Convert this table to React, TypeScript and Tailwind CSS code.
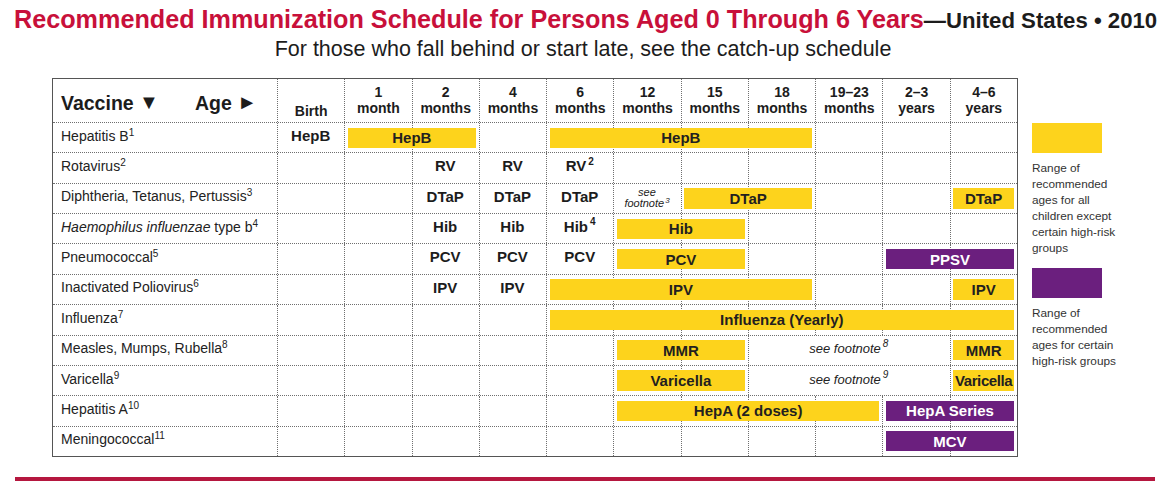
import React from 'react';

const COL_START = [
  'col-start-2',
  'col-start-3',
  'col-start-4',
  'col-start-5',
  'col-start-6',
  'col-start-7',
  'col-start-8',
  'col-start-9',
  'col-start-10',
  'col-start-11',
  'col-start-12',
];
const COL_SPAN = ['', 'col-span-1', 'col-span-2', 'col-span-3', 'col-span-4', 'col-span-5', 'col-span-6', 'col-span-7'];

const ages: Array<[string, string]> = [
  ['', 'Birth'],
  ['1', 'month'],
  ['2', 'months'],
  ['4', 'months'],
  ['6', 'months'],
  ['12', 'months'],
  ['15', 'months'],
  ['18', 'months'],
  ['19–23', 'months'],
  ['2–3', 'years'],
  ['4–6', 'years'],
];

type Item = {
  col: number;
  span?: number;
  kind: 'y' | 'p' | 'txt' | 'note' | 'note2';
  label?: string;
  sup?: string;
  tight?: boolean;
};

type Row = { name: React.ReactNode; items: Item[]; merge?: [number, number] };

const rows: Row[] = [
  {
    name: <>Hepatitis B<sup className="text-[10px]">1</sup></>,
    items: [
      { col: 0, kind: 'txt', label: 'HepB' },
      { col: 1, span: 2, kind: 'y', label: 'HepB' },
      { col: 4, span: 4, kind: 'y', label: 'HepB' },
    ],
  },
  {
    name: <>Rotavirus<sup className="text-[10px]">2</sup></>,
    items: [
      { col: 2, kind: 'txt', label: 'RV' },
      { col: 3, kind: 'txt', label: 'RV' },
      { col: 4, kind: 'txt', label: 'RV', sup: '2' },
    ],
  },
  {
    name: <>Diphtheria, Tetanus, Pertussis<sup className="text-[10px]">3</sup></>,
    items: [
      { col: 2, kind: 'txt', label: 'DTaP' },
      { col: 3, kind: 'txt', label: 'DTaP' },
      { col: 4, kind: 'txt', label: 'DTaP' },
      { col: 5, kind: 'note2', sup: '3' },
      { col: 6, span: 2, kind: 'y', label: 'DTaP' },
      { col: 10, kind: 'y', label: 'DTaP' },
    ],
  },
  {
    name: <><i>Haemophilus influenzae</i> type b<sup className="text-[10px]">4</sup></>,
    items: [
      { col: 2, kind: 'txt', label: 'Hib' },
      { col: 3, kind: 'txt', label: 'Hib' },
      { col: 4, kind: 'txt', label: 'Hib', sup: '4' },
      { col: 5, span: 2, kind: 'y', label: 'Hib' },
    ],
  },
  {
    name: <>Pneumococcal<sup className="text-[10px]">5</sup></>,
    items: [
      { col: 2, kind: 'txt', label: 'PCV' },
      { col: 3, kind: 'txt', label: 'PCV' },
      { col: 4, kind: 'txt', label: 'PCV' },
      { col: 5, span: 2, kind: 'y', label: 'PCV' },
      { col: 9, span: 2, kind: 'p', label: 'PPSV' },
    ],
  },
  {
    name: <>Inactivated Poliovirus<sup className="text-[10px]">6</sup></>,
    items: [
      { col: 2, kind: 'txt', label: 'IPV' },
      { col: 3, kind: 'txt', label: 'IPV' },
      { col: 4, span: 4, kind: 'y', label: 'IPV' },
      { col: 10, kind: 'y', label: 'IPV' },
    ],
  },
  {
    name: <>Influenza<sup className="text-[10px]">7</sup></>,
    items: [{ col: 4, span: 7, kind: 'y', label: 'Influenza (Yearly)' }],
  },
  {
    name: <>Measles, Mumps, Rubella<sup className="text-[10px]">8</sup></>,
    merge: [7, 3],
    items: [
      { col: 5, span: 2, kind: 'y', label: 'MMR' },
      { col: 7, span: 3, kind: 'note', sup: '8' },
      { col: 10, kind: 'y', label: 'MMR' },
    ],
  },
  {
    name: <>Varicella<sup className="text-[10px]">9</sup></>,
    merge: [7, 3],
    items: [
      { col: 5, span: 2, kind: 'y', label: 'Varicella' },
      { col: 7, span: 3, kind: 'note', sup: '9' },
      { col: 10, kind: 'y', label: 'Varicella', tight: true },
    ],
  },
  {
    name: <>Hepatitis A<sup className="text-[10px]">10</sup></>,
    items: [
      { col: 5, span: 4, kind: 'y', label: 'HepA (2 doses)' },
      { col: 9, span: 2, kind: 'p', label: 'HepA Series' },
    ],
  },
  {
    name: <>Meningococcal<sup className="text-[10px]">11</sup></>,
    items: [{ col: 9, span: 2, kind: 'p', label: 'MCV' }],
  },
];

function CellItem({ item }: { item: Item }) {
  const place = `${COL_START[item.col]} ${COL_SPAN[item.span ?? 1]} row-start-1`;

  if (item.kind === 'y' || item.kind === 'p') {
    const color = item.kind === 'y' ? 'bg-[#fdd31c] text-[#231f20]' : 'bg-[#6b1f7e] text-white';
    return (
      <div
        className={`${place} ${color} ${item.tight ? 'tracking-[-0.4px]' : ''} ml-[3.5px] mr-[3px] my-[4.5px] flex items-center justify-center whitespace-nowrap text-[15px] font-bold leading-none`}
      >
        {item.label}
      </div>
    );
  }

  if (item.kind === 'note') {
    return (
      <div className={`${place} flex items-center justify-center pb-[2px] text-[13px] italic text-[#222]`}>
        see footnote<sup className="text-[10px] ml-[2px]">{item.sup}</sup>
      </div>
    );
  }

  if (item.kind === 'note2') {
    return (
      <div className={`${place} flex flex-col items-center justify-center pb-[1px] text-[11px] italic leading-[11px] text-[#222]`}>
        <span>see</span>
        <span>
          footnote<sup className="text-[8px] ml-[1px]">{item.sup}</sup>
        </span>
      </div>
    );
  }

  return (
    <div className={`${place} flex items-center justify-center pb-[3px] text-[15px] font-bold text-[#1c1c1c]`}>
      {item.label}
      {item.sup && <sup className="text-[10px] ml-[2px]">{item.sup}</sup>}
    </div>
  );
}

function ScheduleRow({ row, last }: { row: Row; last: boolean }) {
  const cells: React.ReactNode[] = [];
  for (let c = 0; c < 11; c++) {
    if (row.merge && c > row.merge[0] && c < row.merge[0] + row.merge[1]) continue;
    const span = row.merge && c === row.merge[0] ? row.merge[1] : 1;
    cells.push(
      <div
        key={`c-${c}`}
        className={`${COL_START[c]} ${COL_SPAN[span]} row-start-1 border-l border-dotted border-[#6f6f6f]`}
      />
    );
  }

  return (
    <div
      className={`grid min-h-0 flex-1 grid-cols-[224px_repeat(11,minmax(0,1fr))] ${
        last ? '' : 'border-b border-dotted border-[#6f6f6f]'
      }`}
    >
      <div className="col-start-1 row-start-1 flex items-center pb-[3px] pl-2 text-[14px] text-[#222] whitespace-nowrap">
        <span>{row.name}</span>
      </div>
      {cells}
      {row.items.map((item, i) => (
        <CellItem key={i} item={item} />
      ))}
    </div>
  );
}

export default function App() {
  return (
    <div className="h-[483px] w-[1166px] overflow-hidden bg-white font-['Liberation_Sans',Arial,sans-serif] text-[#1c1c1c]">
      {/* Title */}
      <div className="pl-[14px] pt-[5px] leading-[28px] whitespace-nowrap">
        <span className="text-[25.2px] font-bold text-[#c8103a]">
          Recommended Immunization Schedule for Persons Aged 0 Through 6 Years
        </span>
        <span className="text-[22.2px] font-bold text-[#1c1c1c]">—United States • 2010</span>
      </div>
      <div className="text-center text-[21.5px] leading-[24px] text-[#1c1c1c]">
        For those who fall behind or start late, see the catch-up schedule
      </div>

      {/* Table + legend */}
      <div className="mt-[17px] flex pl-[52px]">
        <div className="flex h-[379px] w-[966px] flex-col border border-[#555]">
          {/* Header */}
          <div className="grid h-[44px] shrink-0 grid-cols-[224px_repeat(11,minmax(0,1fr))] border-b border-dotted border-[#6f6f6f]">
            <div className="flex items-center justify-between pl-2 pr-[20px] pt-[4px] text-[19.5px] font-bold">
              <span>
                Vaccine <span className="text-[20px] align-[1px]">▼</span>
              </span>
              <span>
                Age <span className="text-[20px] align-[1px]">►</span>
              </span>
            </div>
            {ages.map(([n, unit], i) => (
              <div
                key={i}
                className={`flex flex-col items-center justify-end border-l border-dotted border-[#6f6f6f] text-[14px] font-bold leading-[16px] ${
                  i === 0 ? 'pb-[3px]' : 'pb-[6px]'
                }`}
              >
                {n && <span>{n}</span>}
                <span>{unit}</span>
              </div>
            ))}
          </div>

          {rows.map((row, i) => (
            <ScheduleRow key={i} row={row} last={i === rows.length - 1} />
          ))}
        </div>

        {/* Legend */}
        <div className="ml-[14px] mt-[45px] flex w-[110px] flex-col text-[11.8px] leading-[16px] text-[#333]">
          <div className="h-[30px] w-[70px] bg-[#fdd31c]" />
          <div className="mt-[7px]">
            Range of
            <br />
            recommended
            <br />
            ages for all
            <br />
            children except
            <br />
            certain high-risk
            <br />
            groups
          </div>
          <div className="mt-[12px] h-[30px] w-[70px] bg-[#6b1f7e]" />
          <div className="mt-[7px]">
            Range of
            <br />
            recommended
            <br />
            ages for certain
            <br />
            high-risk groups
          </div>
        </div>
      </div>

      <div className="mx-[15px] mt-[20px] h-[4px] w-[1140px] bg-[#b5173f]" />
    </div>
  );
}
